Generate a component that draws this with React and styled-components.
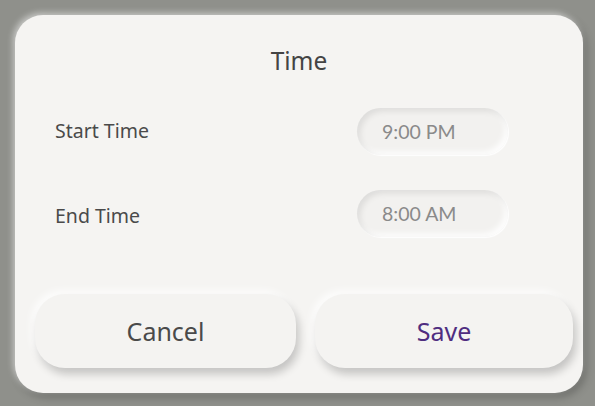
import React from "react";
import styled, { createGlobalStyle } from "styled-components";

const Global = createGlobalStyle`
  html, body { margin: 0; padding: 0; background: #8f908b; }
  body { font-family: "Noto Sans", "Open Sans", sans-serif; }
`;

const Page = styled.div`
  width: 595px;
  height: 406px;
  box-sizing: border-box;
  padding: 15px 12px 0 15px;
  background: #8f908b;
`;

const Card = styled.div`
  width: 568px;
  height: 378px;
  box-sizing: border-box;
  border-radius: 28px;
  background: #f5f4f2;
  box-shadow: -2px -2px 6px rgba(255, 255, 255, 0.55),
    3px 4px 8px rgba(0, 0, 0, 0.25);
  display: flex;
  flex-direction: column;
`;

const Title = styled.h1`
  margin: 0;
  padding-top: 31px;
  font-size: 24.5px;
  line-height: 30px;
  font-weight: 400;
  color: #444;
  text-align: center;
`;

const Rows = styled.div`
  margin-top: 32px;
  display: flex;
  flex-direction: column;
  gap: 35px;
  padding: 0 75px 0 40px;
`;

const Row = styled.div`
  height: 47px;
  display: flex;
  align-items: center;
  justify-content: space-between;
`;

const Label = styled.span`
  font-size: 19.5px;
  color: #4a4a4a;
  margin-top: ${(p) => p.$shift || 0}px;
`;

const Pill = styled.div`
  width: 151px;
  height: 47px;
  box-sizing: border-box;
  border-radius: 24px;
  background: #f2f1ef;
  box-shadow: inset 3px 3px 6px rgba(0, 0, 0, 0.09),
    inset -3px -3px 6px rgba(255, 255, 255, 0.95),
    1px 1px 1px rgba(255, 255, 255, 0.9);
  display: flex;
  align-items: center;
  padding-left: 25px;
  font-family: "Lato", "Noto Sans", sans-serif;
  font-size: 19.5px;
  color: #8a8a8a;
`;

const Actions = styled.div`
  margin-top: 57px;
  display: grid;
  grid-template-columns: 261px 258px;
  gap: 19px;
  padding: 0 10px 0 20px;
`;

const Button = styled.button`
  height: 74px;
  border: none;
  border-radius: 30px;
  background: #f4f3f1;
  box-shadow: 3px 6px 9px rgba(0, 0, 0, 0.2),
    -3px -3px 8px rgba(255, 255, 255, 0.9);
  font-family: "Noto Sans", "Open Sans", sans-serif;
  font-size: 25px;
  color: ${(p) => (p.$primary ? "#4f2d80" : "#4a4a4a")};
  cursor: pointer;
`;

export default function App() {
  return (
    <>
      <Global />
      <Page>
        <Card>
          <Title>Time</Title>
          <Rows>
            <Row>
              <Label $shift={-2}>Start Time</Label>
              <Pill>9:00 PM</Pill>
            </Row>
            <Row>
              <Label $shift={4}>End Time</Label>
              <Pill>8:00 AM</Pill>
            </Row>
          </Rows>
          <Actions>
            <Button>Cancel</Button>
            <Button $primary>Save</Button>
          </Actions>
        </Card>
      </Page>
    </>
  );
}
